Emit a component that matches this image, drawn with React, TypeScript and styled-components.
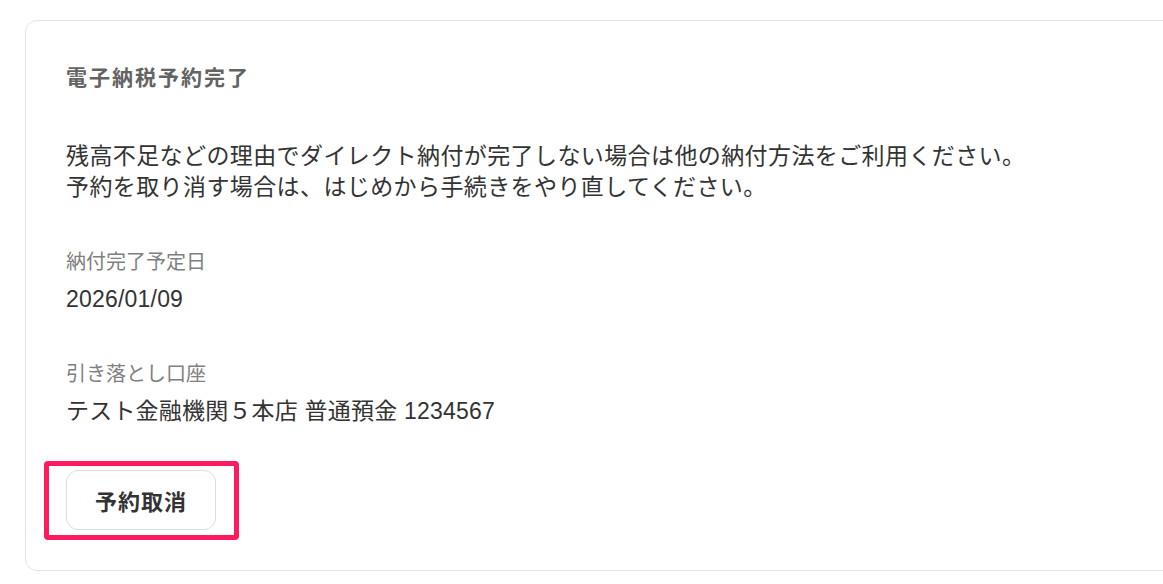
import React from "react";
import styled, { createGlobalStyle } from "styled-components";

const GlobalStyle = createGlobalStyle`
  html, body {
    margin: 0;
    padding: 0;
    background: #ffffff;
    overflow: hidden;
  }
  body {
    font-family: "Liberation Sans", "Noto Sans CJK JP", sans-serif;
    color: #333333;
  }
`;

export default function App() {
  return (
    <>
      <GlobalStyle />
      <Page>
        <Card>
          <Title>電子納税予約完了</Title>
          <Message>
            残高不足などの理由でダイレクト納付が完了しない場合は他の納付方法をご利用ください。
            <br />
            予約を取り消す場合は、はじめから手続きをやり直してください。
          </Message>
          <Field>
            <Label>納付完了予定日</Label>
            <Value>2026/01/09</Value>
          </Field>
          <Field>
            <Label>引き落とし口座</Label>
            <Value>テスト金融機関５本店 普通預金 1234567</Value>
          </Field>
          <Actions>
            <ButtonWrap>
              <Highlight />
              <CancelButton type="button">予約取消</CancelButton>
            </ButtonWrap>
          </Actions>
        </Card>
      </Page>
    </>
  );
}

const Page = styled.div`
  padding: 20px 0 0 25px;
  width: 1300px;
`;

const Card = styled.section`
  width: 1200px;
  box-sizing: border-box;
  border: 1px solid #e4e4e4;
  border-radius: 12px;
  background: #ffffff;
  padding: 41px 40px 40px 40px;
  display: flex;
  flex-direction: column;
`;

const Title = styled.h2`
  margin: 0;
  font-size: 21px;
  line-height: 31px;
  font-weight: 700;
  color: #636363;
  letter-spacing: 2px;
`;

const Message = styled.p`
  margin: 48px 0 0;
  font-size: 23px;
  line-height: 31px;
  color: #333333;
  letter-spacing: 0.4px;
`;

const Field = styled.div`
  margin-top: 45px;
  display: flex;
  flex-direction: column;
  gap: 8px;
`;

const Label = styled.div`
  font-size: 20px;
  line-height: 28px;
  color: #808080;
`;

const Value = styled.div`
  font-size: 23px;
  line-height: 31px;
  color: #333333;
  letter-spacing: 0.2px;
`;

const Actions = styled.div`
  margin-top: 43px;
  display: flex;
`;

const ButtonWrap = styled.div`
  position: relative;
  display: inline-flex;
`;

const Highlight = styled.div`
  position: absolute;
  top: -9px;
  left: -22px;
  right: -23px;
  bottom: -10px;
  border: 5px solid #ff1a5f;
  border-radius: 4px;
  pointer-events: none;
`;

const CancelButton = styled.button`
  width: 150px;
  height: 60px;
  border: 1px solid #dddddd;
  border-radius: 12px;
  background: #ffffff;
  font-family: "Liberation Sans", "Noto Sans CJK JP", sans-serif;
  font-size: 22px;
  font-weight: 700;
  color: #333333;
  letter-spacing: 1px;
  cursor: pointer;
`;
